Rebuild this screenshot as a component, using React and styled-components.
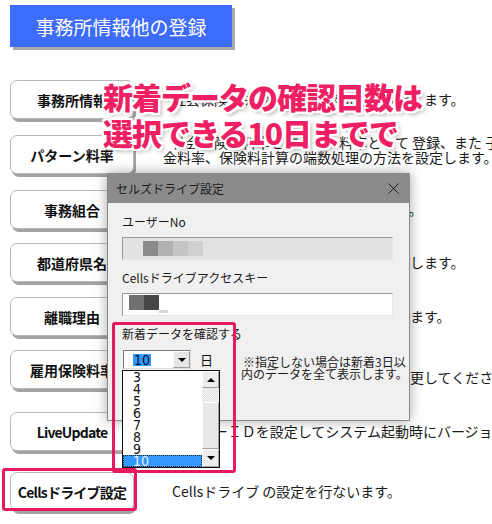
import React from "react";
import styled, { createGlobalStyle } from "styled-components";

const GlobalStyle = createGlobalStyle`
  html, body {
    margin: 0;
    padding: 0;
    background: #fff;
  }
  body {
    font-family: "Noto Sans CJK JP", "Noto Sans", sans-serif;
    color: #111;
  }
`;

const Page = styled.div`
  position: relative;
  width: 492px;
  height: 524px;
  overflow: hidden;
  background: #fff;
`;

const Header = styled.div`
  margin: 5px 0 0 10px;
  width: 222px;
  height: 42px;
  background: #3d6bfb;
  box-shadow: 3px 3px 0 #a9a9a9;
  color: #fff;
  font-size: 19px;
  display: flex;
  align-items: center;
  justify-content: center;
`;

const Menu = styled.div`
  display: flex;
  flex-direction: column;
  padding-left: 10px;
`;

const Row = styled.div`
  display: grid;
  grid-template-columns: 124px 1fr;
  column-gap: 38px;
  align-items: center;
  height: 39px;
  margin-top: ${p => p.$gap}px;
`;

const MenuButton = styled.div`
  height: 100%;
  box-sizing: border-box;
  border: 1px solid #b8b8b8;
  border-radius: 7px;
  background: #fff;
  box-shadow: 2px 3px 0 #a3a3a3;
  display: flex;
  align-items: center;
  justify-content: center;
  font-weight: 700;
  font-size: 14px;
  color: #111;
  letter-spacing: ${p => (p.$tight ? "-0.8px" : "0")};
  white-space: nowrap;
`;

const Desc = styled.div`
  font-size: 14px;
  line-height: 15px;
  color: #1a1a1a;
  white-space: nowrap;
  margin-bottom: ${p => p.$lift || 0}px;
`;

const Line = styled.div`
  margin-left: ${p => p.$shift || 0}px;
`;

const Dialog = styled.div`
  position: absolute;
  left: 107px;
  top: 173px;
  width: 303px;
  height: 248px;
  box-sizing: border-box;
  background: #f0f0f0;
  border: 1px solid #8a8a8a;
  box-shadow: 0 0 12px rgba(0, 0, 0, 0.35);
  display: flex;
  flex-direction: column;
`;

const TitleBar = styled.div`
  height: 29px;
  background: #8b8b8b;
  display: flex;
  align-items: center;
  justify-content: space-between;
  padding: 0 10px 0 8px;
  font-size: 12px;
  color: #1c1c1c;
`;

const DialogBody = styled.div`
  display: flex;
  flex-direction: column;
  padding: 12px 0 0 14px;
`;

const Label = styled.div`
  font-size: 12px;
  line-height: 14px;
  color: #1a1a1a;
  margin-top: ${p => p.$gap || 0}px;
`;

const Field = styled.div`
  width: 271px;
  height: 23px;
  box-sizing: border-box;
  margin-top: 8px;
  border: 1px solid;
  border-color: #9a9a9a #e6e6e6 #e6e6e6 #9a9a9a;
  background: ${p => (p.$disabled ? "#e2e2e2" : "#fff")};
  display: flex;
  align-items: flex-start;
  padding: ${p => p.$pad};
`;

const Pixel = styled.div`
  width: ${p => p.$w || 15}px;
  height: ${p => p.$h || 15}px;
  margin-top: ${p => p.$top || 0}px;
  background: ${p => p.$c};
`;

const ComboRow = styled.div`
  display: flex;
  align-items: flex-start;
  margin-top: 9px;
`;

const Combo = styled.div`
  position: relative;
  width: 68px;
  height: 19px;
  box-sizing: border-box;
  margin-left: 1px;
  background: #fff;
  border: 1px solid;
  border-color: #7d7d7d #dcdcdc #dcdcdc #7d7d7d;
  display: flex;
  align-items: center;
`;

const ComboValue = styled.span`
  margin-left: 9px;
  background: #3399ff;
  color: #06122a;
  font-family: "Liberation Sans Narrow", "DejaVu Sans Condensed", "Liberation Sans", sans-serif;
  font-size: 14px;
  line-height: 12px;
  padding: 0 1px;
`;

const ArrowButton = styled.div`
  margin-left: auto;
  width: 17px;
  height: 17px;
  box-sizing: border-box;
  background: #e6e6e6;
  border: 1px solid;
  border-color: #fff #9a9a9a #9a9a9a #fff;
  display: flex;
  align-items: center;
  justify-content: center;
`;

const Triangle = styled.div`
  width: 0;
  height: 0;
  border-left: 4px solid transparent;
  border-right: 4px solid transparent;
  ${p => (p.$up ? "border-bottom: 4px solid #000;" : "border-top: 4px solid #000;")}
`;

const Unit = styled.span`
  font-size: 13px;
  line-height: 19px;
  margin-left: 9px;
`;

const Note = styled.div`
  margin: 6px 0 0 28px;
  font-size: 12px;
  line-height: 11.5px;
  text-align: center;
  white-space: nowrap;
  color: #1a1a1a;
`;

const DropList = styled.div`
  position: absolute;
  left: -2px;
  top: 19px;
  width: 98px;
  height: 98px;
  box-sizing: border-box;
  background: #fff;
  border: 1px solid #111;
  display: flex;
  z-index: 2;
`;

const Items = styled.div`
  flex: 1;
  display: flex;
  flex-direction: column;
`;

const Item = styled.div`
  height: 12px;
  box-sizing: border-box;
  padding-left: 10px;
  font-family: "Liberation Sans Narrow", "DejaVu Sans Condensed", "Liberation Sans", sans-serif;
  font-size: 14px;
  line-height: 12px;
  color: ${p => (p.$selected ? "#e6f1ff" : "#111")};
  background: ${p => (p.$selected ? "#3399ff" : "transparent")};
  border: ${p => (p.$selected ? "1px dotted #222" : "none")};
  ${p => p.$selected && "line-height: 10px; padding-left: 9px;"}
`;

const ScrollBar = styled.div`
  width: 17px;
  display: flex;
  flex-direction: column;
`;

const ScrollButton = styled.div`
  height: ${p => p.$h}px;
  box-sizing: border-box;
  background: #ececec;
  border: 1px solid;
  border-color: #fff #a0a0a0 #a0a0a0 #fff;
  display: flex;
  align-items: center;
  justify-content: center;
`;

const Track = styled.div`
  height: ${p => p.$h}px;
  background: repeating-conic-gradient(#dcdcdc 0 25%, #fbfbfb 0 50%) 0 0 / 2px 2px;
`;

const Thumb = styled.div`
  height: ${p => p.$h}px;
  box-sizing: border-box;
  background: #e8e8e8;
  border: 1px solid;
  border-color: #fff #a0a0a0 #a0a0a0 #fff;
`;

const Highlight = styled.div`
  position: absolute;
  left: ${p => p.$x}px;
  top: ${p => p.$y}px;
  width: ${p => p.$w}px;
  height: ${p => p.$h}px;
  box-sizing: border-box;
  border: 3px solid #e8195c;
  border-radius: 3px;
  z-index: 3;
`;

const Caption = styled.div`
  position: absolute;
  left: 103px;
  top: 78px;
  z-index: 4;
  font-family: "Noto Sans CJK JP", sans-serif;
  font-weight: 900;
  font-size: 30px;
  line-height: 36px;
  letter-spacing: -1px;
  color: #ee1f63;
  white-space: nowrap;
  text-shadow:
    2px 0 0 #fff, -2px 0 0 #fff, 0 2px 0 #fff, 0 -2px 0 #fff,
    2px 2px 0 #fff, -2px -2px 0 #fff, 2px -2px 0 #fff, -2px 2px 0 #fff,
    3px 3px 4px rgba(0, 0, 0, 0.35);
`;

const CloseIcon = () => (
  <svg width="11" height="11" viewBox="0 0 11 11">
    <path d="M0.5 0.5 L10.5 10.5 M10.5 0.5 L0.5 10.5" stroke="#1a1a1a" strokeWidth="1" fill="none" />
  </svg>
);

const rows = [
  { gap: 33, label: "事務所情報", text: ["社会保険・労働保険の事務所等を登録します。"] },
  {
    gap: 16,
    label: "パターン料率",
    lift: 9,
    text: ["社会保険の料率をパターン料率として 登録、また 子ども・子育て拠出", "金料率、保険料計算の端数処理の方法を設定します。"],
  },
  { gap: 16, label: "事務組合", text: ["労働保険事務組合の情報を登録します。"] },
  { gap: 14, label: "都道府県名", text: ["都道府県名と地域別の最低賃金を登録します。"] },
  { gap: 15, label: "離職理由", text: ["離職票に記載する離職理由の設定をします。"] },
  { gap: 14, label: "雇用保険料率", text: ["雇用保険の料率を設定します。", "年度が変わり料率が変わった場合は変更してください。"] },
  { gap: 23, label: "LiveUpdate", tight: true, text: ["ユーザーＩＤを設定してシステム起動時にバージョンチェックを行います。"] },
  { gap: 21, label: "Cellsドライブ設定", tight: true, text: ["Cellsドライブ の設定を行ないます。"] },
];

const days = [3, 4, 5, 6, 7, 8, 9, 10];

export default function App() {
  return (
    <Page>
      <GlobalStyle />
      <Header>事務所情報他の登録</Header>

      <Menu>
        {rows.map(r => (
          <Row key={r.label} $gap={r.gap}>
            <MenuButton $tight={r.tight}>{r.label}</MenuButton>
            <Desc $lift={r.lift}>
              {r.text.map((t, i) => (
                <Line key={i} $shift={r.label === "パターン料率" && i === 1 ? -9 : 0}>
                  {t}
                </Line>
              ))}
            </Desc>
          </Row>
        ))}
      </Menu>

      <Dialog>
        <TitleBar>
          <span>セルズドライブ設定</span>
          <CloseIcon />
        </TitleBar>
        <DialogBody>
          <Label>ユーザーNo</Label>
          <Field $disabled $pad="3px 0 0 20px">
            <Pixel $c="#8a8a8a" />
            <Pixel $c="#b2b2b2" />
            <Pixel $c="#c5c5c5" />
            <Pixel $c="#d0d0d0" />
          </Field>
          <Label $gap={11}>Cellsドライブアクセスキー</Label>
          <Field $pad="1px 0 0 6px">
            <Pixel $c="#707070" />
            <Pixel $c="#474747" />
            <Pixel $c="#d8d8d8" $w={9} $h={3} $top={15} />
          </Field>
          <Label $gap={11}>新着データを確認する</Label>
          <ComboRow>
            <Combo>
              <ComboValue>10</ComboValue>
              <ArrowButton>
                <Triangle />
              </ArrowButton>
              <DropList>
                <Items>
                  {days.map(d => (
                    <Item key={d} $selected={d === 10}>
                      {d}
                    </Item>
                  ))}
                </Items>
                <ScrollBar>
                  <ScrollButton $h={17}>
                    <Triangle $up />
                  </ScrollButton>
                  <Track $h={14} />
                  <Thumb $h={47} />
                  <ScrollButton $h={18}>
                    <Triangle />
                  </ScrollButton>
                </ScrollBar>
              </DropList>
            </Combo>
            <Unit>日</Unit>
            <Note>
              ※指定しない場合は新着3日以
              <br />
              内のデータを全て表示します。
            </Note>
          </ComboRow>
        </DialogBody>
      </Dialog>

      <Highlight $x={112} $y={322} $w={124} $h={151} />
      <Highlight $x={2} $y={468} $w={135} $h={43} />

      <Caption>
        新着データの確認日数は
        <br />
        選択できる10日までで
      </Caption>
    </Page>
  );
}
